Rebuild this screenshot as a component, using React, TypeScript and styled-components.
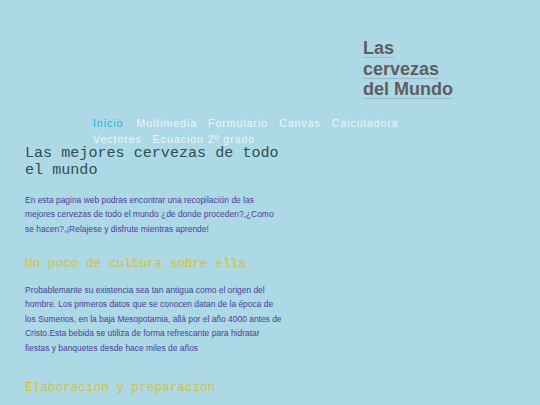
import React from 'react'
import styled, { createGlobalStyle } from 'styled-components'

const GlobalStyle = createGlobalStyle`
  html, body {
    margin: 0;
    padding: 0;
    background-color: #add8e6;
  }
  body {
    font-family: "Liberation Sans", Arial, sans-serif;
    height: 405px;
    overflow: hidden;
  }
`

const links = ['Inicio', 'Multimedia', 'Formulario', 'Canvas', 'Calculadora', 'Vectores', 'Ecuacion 2º grado']

const Header = styled.header`
  padding-top: 38px;
`

const TitleRow = styled.div`
  display: flex;
  justify-content: flex-end;
  padding-right: 77px;
`

const Title = styled.h1`
  width: 100px;
  margin: 0;
  font-family: "Liberation Sans", Arial, sans-serif;
  font-size: 18px;
  font-weight: bold;
  line-height: 20.6px;
  color: #5e5e5e;
  text-decoration: underline;
  text-decoration-color: #9bbac6;
  text-decoration-thickness: 1px;
  text-underline-offset: 3px;
`

const Nav = styled.nav`
  display: flex;
  flex-wrap: wrap;
  column-gap: 11px;
  width: 315px;
  margin: 15px 0 0 93px;
`

const NavLink = styled.a<{ $active?: boolean }>`
  font-size: 10.7px;
  line-height: 16px;
  letter-spacing: 0.9px;
  color: ${(p) => (p.$active ? '#1eb3dd' : '#eef6f9')};
  margin-right: ${(p) => (p.$active ? '2px' : '0')};
  text-decoration: none;
  cursor: pointer;
`

const Main = styled.main`
  width: 258px;
  padding-left: 25px;
`

const Heading = styled.h2`
  margin: -2px 0 0;
  font-family: "Liberation Mono", "Courier New", monospace;
  font-size: 15.1px;
  font-weight: normal;
  line-height: 17px;
  color: #2f4f4f;
`

const SubHeading = styled.h3<{ $top: number }>`
  margin: ${(p) => p.$top}px 0 0;
  font-family: "Liberation Mono", "Courier New", monospace;
  font-size: 12.7px;
  font-weight: normal;
  line-height: 16px;
  color: #d2c23a;
`

const Text = styled.p<{ $top: number }>`
  margin: 0;
  padding-top: ${(p) => p.$top}px;
  font-size: 8.45px;
  line-height: 14.6px;
  color: #4b3f96;
`

export default function App() {
  return (
    <>
      <GlobalStyle />
      <Header>
        <TitleRow>
          <Title>Las cervezas del Mundo</Title>
        </TitleRow>
        <Nav>
          {links.map((l, i) => (
            <NavLink key={l} $active={i === 0}>
              {l}
            </NavLink>
          ))}
        </Nav>
      </Header>
      <Main>
        <Heading>Las mejores cervezas de todo el mundo</Heading>
        <Text $top={14}>
          En esta pagina web podras encontrar una recopilación de las mejores cervezas de todo el
          mundo ¿de donde proceden?,¿Como se hacen?,¡Relajese y disfrute mientras aprende!
        </Text>
        <SubHeading $top={19}>Un poco de cultura sobre ella</SubHeading>
        <Text $top={11}>
          Probablemante su existencia sea tan antigua como el origen del hombre. Los primeros datos
          que se conocen datan de la época de los Sumerios, en la baja Mesopotamia, allá por el año
          4000 antes de Cristo.Esta bebida se utiliza de forma refrescante para hidratar fiestas y
          banquetes desde hace miles de años
        </Text>
        <SubHeading $top={24}>Elaboracion y preparacion</SubHeading>
      </Main>
    </>
  )
}
